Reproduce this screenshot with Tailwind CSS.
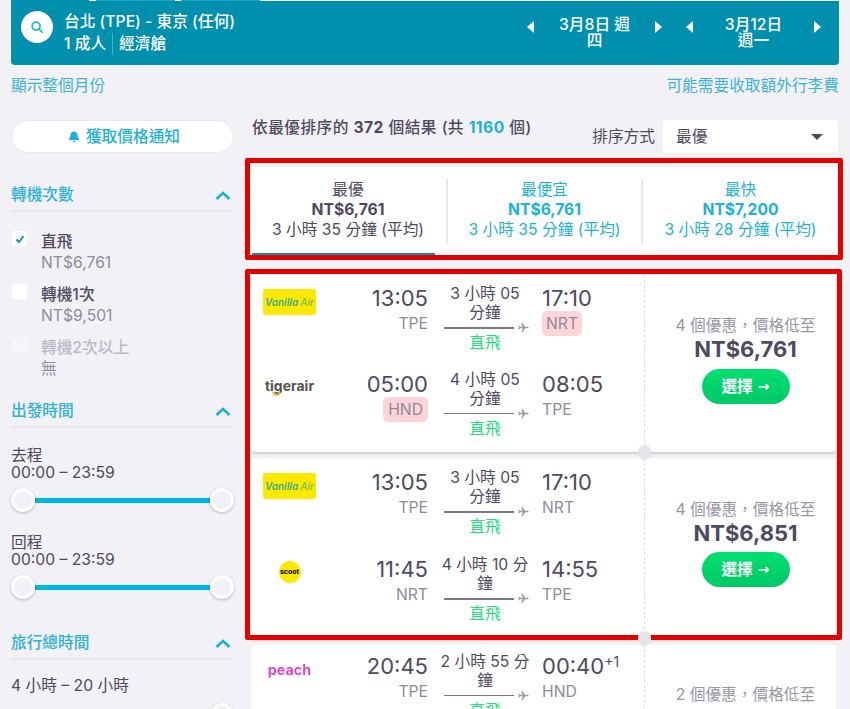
<!DOCTYPE html>
<html lang="zh-Hant">
<head>
<meta charset="UTF-8">
<title>台北 - 東京 機票</title>
<script src="https://cdn.jsdelivr.net/npm/@tailwindcss/browser@4"></script>
</head>
<body class="relative h-[709px] w-[850px] overflow-hidden bg-[#f2f1f5] font-['Inter','Noto_Sans_CJK_TC',sans-serif] text-[15.7px] text-[#4f4a60]">

  <!-- search summary -->
  <div class="mx-[11px] flex h-[65px] w-[828px] items-center rounded-b-[4px] bg-[#008fad] pl-[10px] text-white">
    <div class="mb-[11px] flex h-[32px] w-[32px] items-center justify-center rounded-full bg-white">
      <svg class="h-[14px] w-[14px] text-[#19b5d6]" viewBox="0 0 16 16" fill="none" stroke="currentColor" stroke-width="2"><circle cx="7" cy="7" r="4.5"/><path d="M10.5 10.5l3.5 3.5" stroke-linecap="round"/></svg>
    </div>
    <div class="ml-[11px] flex-1 font-medium">
      <div class="leading-[22px]">台北 (TPE) - 東京 (任何)</div>
      <div class="flex items-center leading-[22px]"><span class="border-r border-white/30 pr-[6px]">1 成人</span><span class="pl-[6px]">經濟艙</span></div>
    </div>
    <div class="flex w-[135px] items-center justify-between font-medium">
      <span class="mb-[12px] h-0 w-0 border-y-[6px] border-r-[7px] border-y-transparent border-r-white"></span>
      <span class="w-[74px] text-center leading-[16px]">3月8日 週四</span>
      <span class="mb-[12px] h-0 w-0 border-y-[6px] border-l-[7px] border-y-transparent border-l-white"></span>
    </div>
    <div class="ml-[24px] mr-[18px] flex w-[135px] items-center justify-between font-medium">
      <span class="mb-[12px] h-0 w-0 border-y-[6px] border-r-[7px] border-y-transparent border-r-white"></span>
      <span class="w-[74px] text-center leading-[16px]">3月12日 週一</span>
      <span class="mb-[12px] h-0 w-0 border-y-[6px] border-l-[7px] border-y-transparent border-l-white"></span>
    </div>
  </div>
  <!-- thin edge of the tab row cut off by the top of the picture -->
  <div class="absolute left-[89px] right-[11px] top-0 flex h-[1px] gap-[6px] bg-white pl-[7px]">
    <span class="w-[79px] bg-[#12a9c9]"></span>
    <span class="w-[79px] bg-[#12a9c9]"></span>
  </div>

  <div class="mx-[11px] mt-[10px] flex w-[828px] justify-between leading-[21px] text-[#3fb3d3]">
    <span>顯示整個月份</span>
    <span>可能需要收取額外行李費</span>
  </div>

  <div class="mt-[24px] flex pl-[11px]">
    <!-- filters -->
    <aside class="w-[223px] shrink-0">
      <div class="flex h-[33px] items-center justify-center gap-[6px] rounded-full border border-[#e9e8ee] bg-white pl-[3px] font-medium text-[#1eb2d6]">
        <svg class="h-[12px] w-[12px]" viewBox="0 0 12 12" fill="currentColor"><path d="M6 0.5c-2.2 0-3.6 1.6-3.6 3.8 0 2.3-1.1 3.2-1.6 3.8v0.9h10.4v-0.9c-0.5-0.6-1.6-1.5-1.6-3.8C9.6 2.1 8.2 0.5 6 0.5zM4.6 9.8a1.4 1.4 0 0 0 2.8 0z"/></svg>
        <span>獲取價格通知</span>
      </div>

      <div class="mt-[31px] flex h-[28px] items-center justify-between border-b-2 border-[#e8e7ed] pb-[4px] font-medium text-[#2fb2d8]">
        <span>轉機次數</span>
        <svg class="mr-[3px] h-[9px] w-[16px]" viewBox="0 0 16 9" fill="none" stroke="#11b5dc" stroke-width="2.6"><path d="M1.5 8L8 2l6.5 6"/></svg>
      </div>

      <div class="mt-[19px] flex pl-[1px]">
        <span class="flex h-[15px] w-[15px] items-center justify-center rounded-[2px] bg-white">
          <svg class="h-[10px] w-[10px]" viewBox="0 0 10 10" fill="none" stroke="#0b93b0" stroke-width="2"><path d="M1.5 5.5L4 8l4.5-6"/></svg>
        </span>
        <div class="ml-[14px] leading-[21px]">
          <div class="font-medium">直飛</div>
          <div class="text-[#8f8b9e]">NT$6,761</div>
        </div>
      </div>
      <div class="mt-[11px] flex pl-[1px]">
        <span class="h-[15px] w-[15px] rounded-[2px] bg-white"></span>
        <div class="ml-[14px] leading-[21px]">
          <div class="font-medium">轉機1次</div>
          <div class="text-[#8f8b9e]">NT$9,501</div>
        </div>
      </div>
      <div class="mt-[11px] flex pl-[1px]">
        <span class="h-[15px] w-[15px] rounded-[2px] bg-[#f6f5f8]"></span>
        <div class="ml-[14px] leading-[21px]">
          <div class="font-medium text-[#bdbac8]">轉機2次以上</div>
          <div class="text-[#8f8b9e]">無</div>
        </div>
      </div>

      <div class="mt-[21px] flex h-[28px] items-center justify-between border-b-2 border-[#e8e7ed] pb-[4px] font-medium text-[#2fb2d8]">
        <span>出發時間</span>
        <svg class="mr-[3px] h-[9px] w-[16px]" viewBox="0 0 16 9" fill="none" stroke="#11b5dc" stroke-width="2.6"><path d="M1.5 8L8 2l6.5 6"/></svg>
      </div>

      <div class="mt-[19px] leading-[17px]">
        <div>去程</div>
        <div>00:00 – 23:59</div>
      </div>
      <div class="mt-[7px] flex items-center">
        <span class="z-10 h-[24px] w-[24px] rounded-full border-[3px] border-white bg-[#f2f1f5] shadow-[0_1px_3px_rgba(0,0,0,0.25)]"></span>
        <span class="h-[5px] flex-1 bg-[#00b5dc]"></span>
        <span class="z-10 h-[24px] w-[24px] rounded-full border-[3px] border-white bg-[#f2f1f5] shadow-[0_1px_3px_rgba(0,0,0,0.25)]"></span>
      </div>

      <div class="mt-[22px] leading-[17px]">
        <div>回程</div>
        <div>00:00 – 23:59</div>
      </div>
      <div class="mt-[7px] flex items-center">
        <span class="z-10 h-[24px] w-[24px] rounded-full border-[3px] border-white bg-[#f2f1f5] shadow-[0_1px_3px_rgba(0,0,0,0.25)]"></span>
        <span class="h-[5px] flex-1 bg-[#00b5dc]"></span>
        <span class="z-10 h-[24px] w-[24px] rounded-full border-[3px] border-white bg-[#f2f1f5] shadow-[0_1px_3px_rgba(0,0,0,0.25)]"></span>
      </div>

      <div class="mt-[33px] flex h-[28px] items-center justify-between border-b-2 border-[#e8e7ed] pb-[4px] font-medium text-[#2fb2d8]">
        <span>旅行總時間</span>
        <svg class="mr-[3px] h-[9px] w-[16px]" viewBox="0 0 16 9" fill="none" stroke="#11b5dc" stroke-width="2.6"><path d="M1.5 8L8 2l6.5 6"/></svg>
      </div>
      <div class="mt-[15px] leading-[21px]">4 小時 – 20 小時</div>
      <div class="mt-[7px] flex h-[10px] justify-end overflow-hidden">
        <span class="h-[24px] w-[24px] shrink-0 rounded-full border-[3px] border-white bg-[#f2f1f5] shadow-[0_1px_3px_rgba(0,0,0,0.25)]"></span>
      </div>
    </aside>

    <!-- results -->
    <main class="ml-[16px] w-[588px] shrink-0">
      <div class="flex h-[34px] items-start justify-between">
        <div class="pl-[2px] font-medium leading-[16px] tracking-[0.45px]">依最優排序的 <b>372</b> 個結果 (共 <b class="text-[#1eb2d6]">1160</b> 個)</div>
        <div class="flex items-center">
          <span class="mr-[8px]">排序方式</span>
          <div class="flex h-[33px] w-[175px] items-center justify-between rounded-[2px] bg-white pl-[13px] pr-[15px]">
            <span>最優</span>
            <span class="h-0 w-0 border-x-[6px] border-t-[6px] border-x-transparent border-t-[#4f4a60]"></span>
          </div>
        </div>
      </div>

      <div class="mt-[13px] flex h-[89px] w-[588px] items-stretch rounded-[3px] bg-white text-center leading-[20px]">
        <div class="relative w-[196px] pt-[13px]">
          <div>最優</div>
          <div class="font-bold">NT$6,761</div>
          <div>3 小時 35 分鐘 (平均)</div>
          <span class="absolute bottom-0 left-[2px] h-[3px] w-[183px] bg-[#0d8fae]"></span>
        </div>
        <div class="my-[12px] w-[195px] border-l-2 border-[#e8e7ed] pt-[1px] text-[#1eb2d6]">
          <div>最便宜</div>
          <div class="font-bold">NT$6,761</div>
          <div>3 小時 35 分鐘 (平均)</div>
        </div>
        <div class="my-[12px] flex-1 border-l-2 border-[#e8e7ed] pt-[1px] text-[#1eb2d6]">
          <div>最快</div>
          <div class="font-bold">NT$7,200</div>
          <div>3 小時 28 分鐘 (平均)</div>
        </div>
      </div>

      <!-- card 1 -->
      <article class="relative ml-[1px] mt-[19px] flex h-[177px] w-[585px] rounded-[4px] bg-white shadow-[0_2px_2px_rgba(0,0,0,0.14)]">
        <div class="w-[393px] pt-[9px]">
          <div class="flex h-[72px]">
            <div class="ml-[12px] mt-[5px] flex h-[26px] w-[53px] items-center justify-center gap-[2px] rounded-[2px] bg-[#fde800] text-[10px] font-semibold italic text-[#3aae8c]">Vanilla <span class="text-[#8cc63f]">Air</span></div>
            <div class="ml-[30px] w-[82px] text-right">
              <div class="text-[22px] leading-[28px]">13:05</div>
              <div class="leading-[24px] text-[#8f8b9e]">TPE</div>
            </div>
            <div class="ml-[13px] w-[88px]">
              <div class="h-[38px] text-center leading-[19px]">3 小時 05 分鐘</div>
              <div class="flex items-center gap-[4px] pl-[3px]"><span class="h-[2px] w-[73px] bg-[#7d7690]"></span><svg class="h-[11px] w-[11px]" viewBox="0 0 12 12" fill="#9c98aa"><path d="M12 6c0-.5-.5-.9-1-.9H8L5 .5H3.8L5.3 5.1H2.4L1.3 3.7H.3L1 6 .3 8.3h1l1.1-1.4h2.9L3.8 11.5H5l3-4.6h3c.5 0 1-.4 1-.9z"/></svg></div>
              <div class="text-center leading-[19px] text-[#1fe07e]">直飛</div>
            </div>
            <div class="ml-[13px]">
              <div class="text-[22px] leading-[28px]">17:10</div>
              <div class="-mt-[1px] w-fit rounded-[5px] bg-[#fdd5d8] px-[4px] leading-[25px] text-[#8f8b9e]">NRT</div>
            </div>
          </div>
          <div class="mt-[14px] flex h-[72px]">
            <div class="ml-[12px] mt-[8px] h-[26px] w-[53px] text-center text-[14px] font-bold leading-[16px] text-[#55534e]">
              tigerair
              <svg class="-mt-[3px] ml-[9px] block h-[5px] w-[9px]" viewBox="0 0 9 5" fill="none" stroke="#f5a623" stroke-width="1.6"><path d="M1 1c.6 2 1.8 3 3.5 3S7.400 3 8 1"/></svg>
            </div>
            <div class="ml-[30px] w-[82px] text-right">
              <div class="text-[22px] leading-[28px]">05:00</div>
              <div class="-mt-[1px] ml-auto w-fit rounded-[5px] bg-[#fdd5d8] px-[5px] leading-[25px] text-[#8f8b9e]">HND</div>
            </div>
            <div class="ml-[13px] w-[88px]">
              <div class="h-[38px] text-center leading-[19px]">4 小時 05 分鐘</div>
              <div class="flex items-center gap-[4px] pl-[3px]"><span class="h-[1px] w-[73px] bg-[#7d7690]"></span><svg class="h-[11px] w-[11px]" viewBox="0 0 12 12" fill="#9c98aa"><path d="M12 6c0-.5-.5-.9-1-.9H8L5 .5H3.8L5.3 5.1H2.4L1.3 3.7H.3L1 6 .3 8.3h1l1.1-1.4h2.9L3.8 11.5H5l3-4.6h3c.5 0 1-.4 1-.9z"/></svg></div>
              <div class="text-center leading-[19px] text-[#1fe07e]">直飛</div>
            </div>
            <div class="ml-[13px]">
              <div class="text-[22px] leading-[28px]">08:05</div>
              <div class="leading-[24px] text-[#8f8b9e]">TPE</div>
            </div>
          </div>
        </div>
        <div class="flex flex-1 flex-col items-center border-l border-dashed border-[#dddce3] pl-[10px] pt-[41px] text-center">
          <div class="leading-[20px] text-[#9a96a8]">4 個優惠，價格低至</div>
          <div class="text-[22px] font-bold leading-[27px]">NT$6,761</div>
          <div class="mt-[6px] flex h-[35px] w-[88px] items-center justify-center gap-[5px] rounded-full bg-gradient-to-b from-[#00e070] to-[#00c868] font-bold text-white">選擇<span class="font-['DejaVu_Sans',sans-serif] text-[14px]">→</span></div>
        </div>
        <span class="absolute -bottom-[8px] left-[387px] z-10 h-[15px] w-[13px] rounded-full bg-[#e6e5ea]"></span>
      </article>

      <!-- card 2 -->
      <article class="relative ml-[1px] mt-[6px] flex h-[181px] w-[585px] rounded-[4px] bg-white shadow-[0_2px_2px_rgba(0,0,0,0.14)]">
        <div class="w-[393px] pt-[10px]">
          <div class="flex h-[72px]">
            <div class="ml-[12px] mt-[5px] flex h-[26px] w-[53px] items-center justify-center gap-[2px] rounded-[2px] bg-[#fde800] text-[10px] font-semibold italic text-[#3aae8c]">Vanilla <span class="text-[#8cc63f]">Air</span></div>
            <div class="ml-[30px] w-[82px] text-right">
              <div class="text-[22px] leading-[28px]">13:05</div>
              <div class="leading-[24px] text-[#8f8b9e]">TPE</div>
            </div>
            <div class="ml-[13px] w-[88px]">
              <div class="h-[38px] text-center leading-[19px]">3 小時 05 分鐘</div>
              <div class="flex items-center gap-[4px] pl-[3px]"><span class="h-[2px] w-[73px] bg-[#7d7690]"></span><svg class="h-[11px] w-[11px]" viewBox="0 0 12 12" fill="#9c98aa"><path d="M12 6c0-.5-.5-.9-1-.9H8L5 .5H3.8L5.3 5.1H2.4L1.3 3.7H.3L1 6 .3 8.3h1l1.1-1.4h2.9L3.8 11.5H5l3-4.6h3c.5 0 1-.4 1-.9z"/></svg></div>
              <div class="text-center leading-[19px] text-[#1fe07e]">直飛</div>
            </div>
            <div class="ml-[13px]">
              <div class="text-[22px] leading-[28px]">17:10</div>
              <div class="leading-[24px] text-[#8f8b9e]">NRT</div>
            </div>
          </div>
          <div class="mt-[15px] flex h-[72px]">
            <div class="ml-[12px] mt-[4px] flex h-[26px] w-[53px] items-center justify-center">
              <span class="flex h-[22px] w-[22px] items-center justify-center rounded-full bg-[#fde800] text-[7px] font-bold text-black">scoot</span>
            </div>
            <div class="ml-[30px] w-[82px] text-right">
              <div class="text-[22px] leading-[28px]">11:45</div>
              <div class="leading-[24px] text-[#8f8b9e]">NRT</div>
            </div>
            <div class="ml-[13px] w-[88px]">
              <div class="h-[38px] text-center leading-[19px]">4 小時 10 分鐘</div>
              <div class="flex items-center gap-[4px] pl-[3px]"><span class="h-[2px] w-[73px] bg-[#7d7690]"></span><svg class="h-[11px] w-[11px]" viewBox="0 0 12 12" fill="#9c98aa"><path d="M12 6c0-.5-.5-.9-1-.9H8L5 .5H3.8L5.3 5.1H2.4L1.3 3.7H.3L1 6 .3 8.3h1l1.1-1.4h2.9L3.8 11.5H5l3-4.6h3c.5 0 1-.4 1-.9z"/></svg></div>
              <div class="text-center leading-[19px] text-[#1fe07e]">直飛</div>
            </div>
            <div class="ml-[13px]">
              <div class="text-[22px] leading-[28px]">14:55</div>
              <div class="leading-[24px] text-[#8f8b9e]">TPE</div>
            </div>
          </div>
        </div>
        <div class="flex flex-1 flex-col items-center border-l border-dashed border-[#dddce3] pl-[10px] pt-[42px] text-center">
          <div class="leading-[20px] text-[#9a96a8]">4 個優惠，價格低至</div>
          <div class="text-[22px] font-bold leading-[27px]">NT$6,851</div>
          <div class="mt-[5px] flex h-[35px] w-[88px] items-center justify-center gap-[5px] rounded-full bg-gradient-to-b from-[#00e070] to-[#00c868] font-bold text-white">選擇<span class="font-['DejaVu_Sans',sans-serif] text-[14px]">→</span></div>
        </div>
        <span class="absolute -bottom-[7px] left-[387px] z-30 h-[15px] w-[13px] rounded-full bg-[#e6e5ea]"></span>
      </article>

      <!-- card 3, runs on below the window -->
      <article class="ml-[1px] mt-[6px] flex h-[177px] w-[585px] rounded-[4px] bg-white">
        <div class="w-[393px] pt-[7px]">
          <div class="flex h-[72px]">
            <div class="ml-[12px] mt-[5px] h-[26px] w-[53px] text-center text-[14.500px] font-semibold leading-[26px] text-[#e23bc8]">peach</div>
            <div class="ml-[30px] w-[82px] text-right">
              <div class="text-[22px] leading-[28px]">20:45</div>
              <div class="leading-[24px] text-[#8f8b9e]">TPE</div>
            </div>
            <div class="ml-[13px] w-[88px]">
              <div class="-mx-[2px] h-[38px] text-center leading-[19px]">2 小時 55 分<br>鐘</div>
              <div class="flex items-center gap-[4px] pl-[3px]"><span class="h-[1px] w-[73px] bg-[#7d7690]"></span><svg class="h-[11px] w-[11px]" viewBox="0 0 12 12" fill="#9c98aa"><path d="M12 6c0-.5-.5-.9-1-.9H8L5 .5H3.8L5.3 5.1H2.4L1.3 3.7H.3L1 6 .3 8.3h1l1.1-1.4h2.9L3.8 11.5H5l3-4.6h3c.5 0 1-.4 1-.9z"/></svg></div>
              <div class="text-center leading-[19px] text-[#1fe07e]">直飛</div>
            </div>
            <div class="ml-[13px]">
              <div class="text-[22px] leading-[28px]">00:40<sup class="text-[14px]">+1</sup></div>
              <div class="leading-[24px] text-[#8f8b9e]">HND</div>
            </div>
          </div>
        </div>
        <div class="flex flex-1 flex-col items-center border-l border-dashed border-[#dddce3] pl-[10px] pt-[40px] text-center">
          <div class="leading-[20px] text-[#9a96a8]">2 個優惠，價格低至</div>
        </div>
      </article>
    </main>
  </div>

  <!-- red annotation frames over the screenshot -->
  <div class="pointer-events-none absolute left-[245px] top-[158px] h-[102px] w-[598px] rounded-[2px] border-[5px] border-[#e50000]"></div>
  <div class="pointer-events-none absolute left-[245px] top-[269px] z-20 h-[371px] w-[597px] rounded-[2px] border-[5px] border-[#e50000]"></div>
</body>
</html>
